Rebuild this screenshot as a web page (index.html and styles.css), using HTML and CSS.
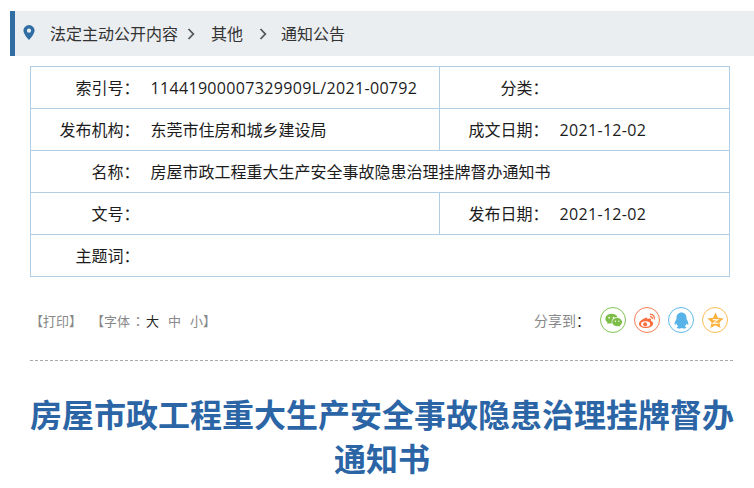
FILE: index.html
```html
<!DOCTYPE html>
<html lang="zh-CN">
<head>
<meta charset="utf-8">
<title>房屋市政工程重大生产安全事故隐患治理挂牌督办通知书</title>
<link rel="stylesheet" href="styles.css">
</head>
<body>
<nav class="crumbs">
  <svg class="pin" viewBox="0 0 12 15" width="12" height="15"><path fill-rule="evenodd" fill="#2f6da3" d="M6 0a5.600 5.600 0 0 0-5.600 5.600C.4 9.400 6 15 6 15s5.600-5.600 5.600-9.400A5.600 5.600 0 0 0 6 0zm0 3.600a2.100 2.100 0 1 1 0 4.200 2.100 2.100 0 0 1 0-4.200z"/></svg>
  <a class="crumb first">法定主动公开内容</a>
  <svg class="chev c1" viewBox="0 0 8 12" width="8" height="12"><path d="M1.500 1 6.300 6l-4.800 5" fill="none" stroke="#555" stroke-width="1.800"/></svg>
  <a class="crumb">其他</a>
  <svg class="chev c2" viewBox="0 0 8 12" width="8" height="12"><path d="M1.500 1 6.300 6l-4.800 5" fill="none" stroke="#555" stroke-width="1.800"/></svg>
  <a class="crumb">通知公告</a>
</nav>
<table class="meta">
  <colgroup><col class="c-l"><col class="c-v"><col class="c-l2"><col></colgroup>
  <tr><th>索引号<i class="colon">：</i></th><td class="num">11441900007329909L/2021-00792</td><th>分类<i class="colon">：</i></th><td></td></tr>
  <tr><th>发布机构<i class="colon">：</i></th><td>东莞市住房和城乡建设局</td><th>成文日期<i class="colon">：</i></th><td class="num">2021-12-02</td></tr>
  <tr><th>名称<i class="colon">：</i></th><td colspan="3">房屋市政工程重大生产安全事故隐患治理挂牌督办通知书</td></tr>
  <tr><th>文号<i class="colon">：</i></th><td></td><th>发布日期<i class="colon">：</i></th><td class="num">2021-12-02</td></tr>
  <tr><th>主题词<i class="colon">：</i></th><td colspan="3"></td></tr>
</table>
<div class="tools">
  <div class="font-tools">
    <span>【打印】</span>
    <span class="font-set">【字体<i class="colon">：</i><b class="on">大</b><b>中</b><b>小</b>】</span>
  </div>
  <div class="share">
    <span class="share-label">分享到<i class="colon dark">：</i></span>
    <span class="ico wx"><svg viewBox="0 0 20 20" width="20" height="20"><path fill="#7cbd47" d="M7.800 3C4.300 3 1.500 5.300 1.500 8.200c0 1.700 1 3.100 2.400 4.100L3.300 14l2.100-1.100c.7.200 1.500.3 2.400.3h.5c-.2-.5-.3-1-.3-1.500 0-2.800 2.600-5 5.900-5h.5C13.800 4.500 11 3 7.800 3z"/><path fill="#7cbd47" d="M19 11.700c0-2.400-2.400-4.300-5.200-4.300s-5.200 1.900-5.200 4.300 2.400 4.300 5.200 4.300c.6 0 1.200-.1 1.800-.3l1.700 1-.5-1.500c1.300-.8 2.200-2.100 2.200-3.500z"/><circle cx="5.500" cy="7" r=".9" fill="#fff"/><circle cx="10" cy="7" r=".9" fill="#fff"/><circle cx="12" cy="10.800" r=".7" fill="#fff"/><circle cx="15.600" cy="10.800" r=".7" fill="#fff"/></svg></span>
    <span class="ico wb"><svg viewBox="0 0 20 20" width="20" height="20"><path fill="#fb6e3d" d="M8.500 7.200C5 8 1 11.200 1 13.800 1 16.200 4.200 18 8 18c4.500 0 8-2.400 8-4.900 0-1.600-1.500-2.300-2.400-2.600.5-1.200.4-2.300-1-2.600-1-.2-2.300.4-2.800.7.300-1.300-.2-2.300-1.300-1.400z"/><ellipse cx="8" cy="13.700" rx="4.800" ry="3" fill="#fff"/><circle cx="7.500" cy="13.900" r="2.100" fill="#fb6e3d"/><path fill="none" stroke="#fb6e3d" stroke-width="1.300" d="M12.500 3.800c3-.7 5.500 1.800 4.600 5M12.800 6.100c1.400-.3 2.600.9 2.200 2.300"/></svg></span>
    <span class="ico qq"><svg viewBox="0 0 20 20" width="20" height="20"><path fill="#58b4e8" d="M10 1.500c-3.300 0-5.300 2.500-5.300 5.500v1.700C3.500 10.300 2.500 12.500 2.800 14.500c.8.300 1.500-.7 1.900-1.300.3 1.200.9 2.200 1.800 3-.9.300-2 .9-1.500 1.700.8.800 3 .5 5-.1 2 .6 4.200.9 5 .1.500-.8-.6-1.400-1.500-1.700.9-.8 1.500-1.800 1.800-3 .4.600 1.100 1.600 1.900 1.300.3-2-.7-4.200-1.900-5.800V7c0-3-2-5.500-5.300-5.500z"/></svg></span>
    <span class="ico fav"><svg viewBox="0 0 20 20" width="20" height="20"><path fill="#fbb23d" d="M10 1.500l2.600 5.600 6 .7-4.500 4.100 1.200 6L10 15l-5.300 2.900 1.200-6L1.400 7.800l6-.7z"/><path fill="none" stroke="#fff2dc" stroke-width="1.300" d="M7 9h5.500L7.500 13H13"/></svg></span>
  </div>
</div>
<article class="article">
  <h1>房屋市政工程重大生产安全事故隐患治理挂牌督办通知书</h1>
</article>
</body>
</html>
```
FILE: styles.css
```css
* { box-sizing: border-box; }
html, body { margin: 0; padding: 0; overflow: hidden; }
body { height: 488px; padding-top: 11px; background: #fff; color: #333; font-family: "Noto Sans CJK SC", "Noto Sans", sans-serif; font-size: 16px; }
.crumbs { display: flex; align-items: center; height: 45px; margin-left: 10px; padding-left: 8px; background: #ebeef1; border-left: 5px solid #2f6da3; line-height: 45px; }
.pin { flex: none; margin-right: 15px; margin-top: -3px; }
.crumb { color: #333; white-space: nowrap; }
.chev { flex: none; }
.c1 { margin: 0 16px 0 9px; }
.c2 { margin: 0 14px 0 16px; }
.meta { width: 700px; margin: 10px 0 0 30px; border-collapse: collapse; table-layout: fixed; color: #1c1c1c; }
.meta th, .meta td { height: 42px; padding: 0 0 2px; border: 1px solid #b0cfe6; font-weight: 400; line-height: 24px; }
.meta th { text-align: right; padding-right: 1px; border-right: 0; }
.meta td { padding-left: 10px; border-left: 0; white-space: nowrap; }
.meta .num { font-family: "Open Sans", "Noto Sans CJK SC", sans-serif; letter-spacing: .33px; padding-bottom: 0; }
.colon { font-style: normal; font-family: "Noto Sans CJK TC", "Noto Sans CJK SC", sans-serif; }
.dark { color: #222; }
.c-l { width: 110px; }
.c-v { width: 299px; }
.c-l2 { width: 110px; }
.tools { display: flex; justify-content: space-between; align-items: center; height: 32px; margin: 27px 26px 0 30px; color: #888; font-size: 13px; }
.font-tools { display: flex; gap: 9px; }
.font-set .colon { display: inline-block; width: 16px; text-align: center; }
.font-set b { font-weight: 400; margin-right: 9px; }
.font-set b:last-of-type { margin-right: 0; }
.font-set .on { color: #222; }
.share { display: flex; align-items: center; gap: 8px; }
.share-label { margin-right: 2px; font-size: 14px; }
.ico { display: flex; align-items: center; justify-content: center; width: 26px; height: 26px; border-radius: 50%; border: 1px solid; }
.ico svg { width: 19px; height: 19px; }
.wx { border-color: #7fc452; }
.wb { border-color: #fb7d52; }
.qq { border-color: #5fb8ea; }
.fav { border-color: #fdbe57; }
.article { margin: 24px 21px 0 30px; border-top: 1px dashed #aaa; padding-top: 30px; }
.article h1 { margin: 0; width: 704px; text-align: center; color: #2b65a5; font-size: 32px; line-height: 44px; font-weight: 700; }
```
